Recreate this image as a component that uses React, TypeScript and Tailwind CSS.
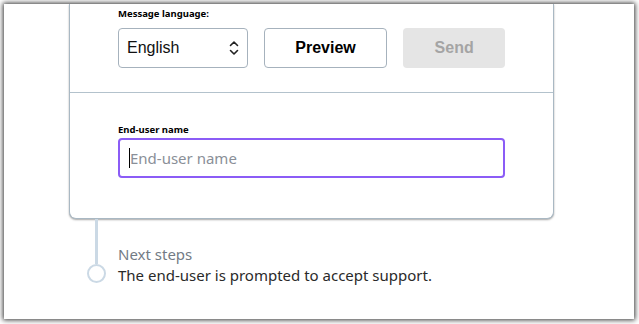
import React from "react";

export default function App() {
  return (
    <div className="w-[639px] h-[324px] bg-white overflow-hidden">
      <div className="ml-[4px] mt-[4px] w-[630px] h-[315px] bg-white shadow-[0_0_5px_1px_rgba(0,0,0,0.8)] flex flex-col">
        <div className="ml-[65px] w-[485px] rounded-b-[7px] border border-t-0 border-[#a9b8c3] shadow-[0_1px_2px_rgba(0,0,0,0.35)] bg-white">
          <div className="px-[48px] pt-[4px] pb-[24px]">
            <div className="text-[9.5px] leading-[12px] font-bold text-black" style={{ fontFamily: '"Noto Sans", sans-serif' }}>
              Message language:
            </div>
            <div className="mt-[8px] flex gap-[16px]" style={{ fontFamily: '"Liberation Sans", Arial, sans-serif' }}>
              <div className="w-[130px] h-[40px] rounded-[4px] border border-[#a6b2bd] flex items-center justify-between pl-[8px] pr-[8px]">
                <span className="text-[16px] text-[#111]">English</span>
                <svg width="10" height="16" viewBox="0 0 10 16" fill="none" stroke="#222" strokeWidth="1.6" strokeLinecap="round" strokeLinejoin="round">
                  <path d="M1.5 5.5 L5 2 L8.5 5.5" />
                  <path d="M1.5 10.5 L5 14 L8.5 10.5" />
                </svg>
              </div>
              <div className="w-[124px] h-[40px] rounded-[4px] border border-[#a6b2bd] flex items-center justify-center text-[16px] font-bold text-black">
                Preview
              </div>
              <div className="w-[102px] h-[40px] rounded-[4px] bg-[#e5e5e5] flex items-center justify-center text-[16px] font-bold text-[#a4a4a4]">
                Send
              </div>
            </div>
          </div>
          <div className="h-px bg-[#b3c2cc]" />
          <div className="px-[48px] pt-[31px] pb-[40px]">
            <div className="text-[9.5px] leading-[12px] font-bold text-black" style={{ fontFamily: '"Noto Sans", sans-serif' }}>
              End-user name
            </div>
            <div className="mt-[2px] h-[40px] rounded-[4px] border-2 border-[#8b5cf6] flex items-center pl-[9px]" style={{ fontFamily: '"Noto Sans", sans-serif' }}>
              <span className="w-px h-[20px] bg-black" />
              <span className="text-[15px] text-[#8a8f98]">End-user name</span>
            </div>
          </div>
        </div>
        <div className="flex">
          <div className="ml-[82px] w-[20px] flex flex-col items-center">
            <div className="w-[3px] h-[45px] bg-[#cbd9e5]" />
            <div className="w-[19px] h-[19px] rounded-full border-[2.5px] border-[#cbd9e5]" />
          </div>
          <div className="ml-[12px] pt-[25px]" style={{ fontFamily: '"Noto Sans", sans-serif' }}>
            <div className="text-[15px] leading-[21px] text-[#737b85]">Next steps</div>
            <div className="text-[15px] leading-[21px] text-[#2a2a2a]">The end-user is prompted to accept support.</div>
          </div>
        </div>
      </div>
    </div>
  );
}
